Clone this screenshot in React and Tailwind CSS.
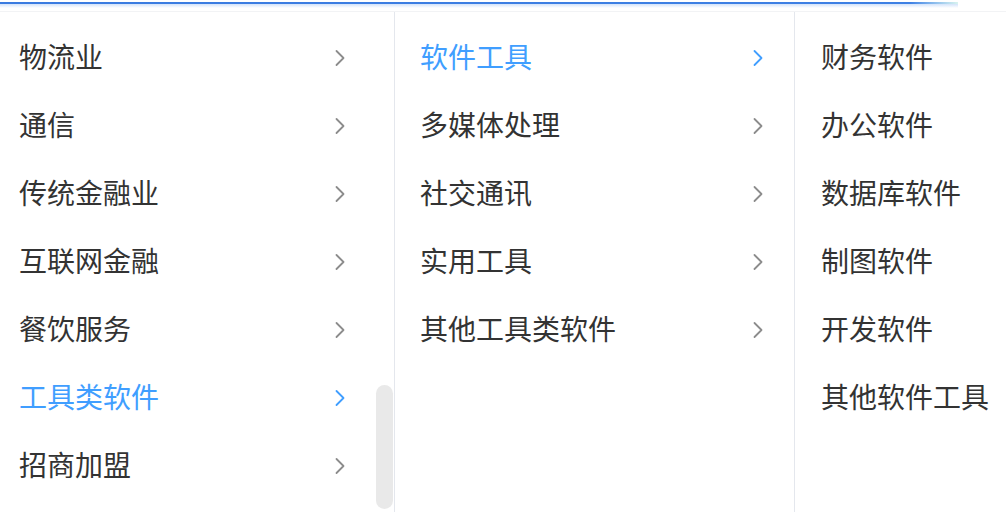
import React from "react";

const col1 = [
  { t: "物流业" },
  { t: "通信" },
  { t: "传统金融业" },
  { t: "互联网金融" },
  { t: "餐饮服务" },
  { t: "工具类软件", active: true },
  { t: "招商加盟" },
];
const col2 = [
  { t: "软件工具", active: true },
  { t: "多媒体处理" },
  { t: "社交通讯" },
  { t: "实用工具" },
  { t: "其他工具类软件" },
];
const col3 = ["财务软件", "办公软件", "数据库软件", "制图软件", "开发软件", "其他软件工具"];

function Chevron({ active }) {
  return (
    <svg width="12" height="18" viewBox="0 0 12 18" className="shrink-0">
      <path
        d="M2.5 2 L9.5 9 L2.5 16"
        fill="none"
        stroke={active ? "#409eff" : "#8c8c8c"}
        strokeWidth="1.8"
        strokeLinecap="round"
        strokeLinejoin="round"
      />
    </svg>
  );
}

export default function App() {
  const font = { fontFamily: '"Noto Sans CJK SC", "Noto Sans", sans-serif' };
  return (
    <div className="w-[1006px] h-[512px] overflow-hidden bg-white flex flex-col" style={font}>
      <div className="h-[12px] shrink-0 flex flex-col border-b border-[#f2f3f5]">
        <div className="mt-[2px] h-[2px] w-[958px] bg-gradient-to-r from-[#3a7be0] via-[#3d80e4] via-[95%] to-[#d8f3ee]" />
        <div className="h-[4px] w-[958px] bg-gradient-to-b from-[#d3e3fa] to-white" />
      </div>
      <div className="flex flex-1 min-h-0">
        <div className="relative w-[395px] border-r border-[#e4e7ed] pt-[12px]">
          {col1.map((r) => (
            <div key={r.t} className="h-[68px] flex items-center justify-between pl-[19px] pr-[48px]">
              <span className={`-translate-y-[2px] text-[28px] leading-none ${r.active ? "text-[#409eff]" : "text-[#333333]"}`}>{r.t}</span>
              <Chevron active={r.active} />
            </div>
          ))}
          <div className="absolute left-[376px] top-[373px] w-[17px] h-[124px] rounded-full bg-[#e9e9e9]" />
        </div>
        <div className="w-[400px] border-r border-[#e4e7ed] pt-[12px]">
          {col2.map((r) => (
            <div key={r.t} className="h-[68px] flex items-center justify-between pl-[25px] pr-[30px]">
              <span className={`-translate-y-[2px] text-[28px] leading-none ${r.active ? "text-[#409eff]" : "text-[#333333]"}`}>{r.t}</span>
              <Chevron active={r.active} />
            </div>
          ))}
        </div>
        <div className="flex-1 pt-[12px]">
          {col3.map((t) => (
            <div key={t} className="h-[68px] flex items-center pl-[26px]">
              <span className="-translate-y-[2px] text-[28px] leading-none text-[#333333]">{t}</span>
            </div>
          ))}
        </div>
      </div>
    </div>
  );
}
